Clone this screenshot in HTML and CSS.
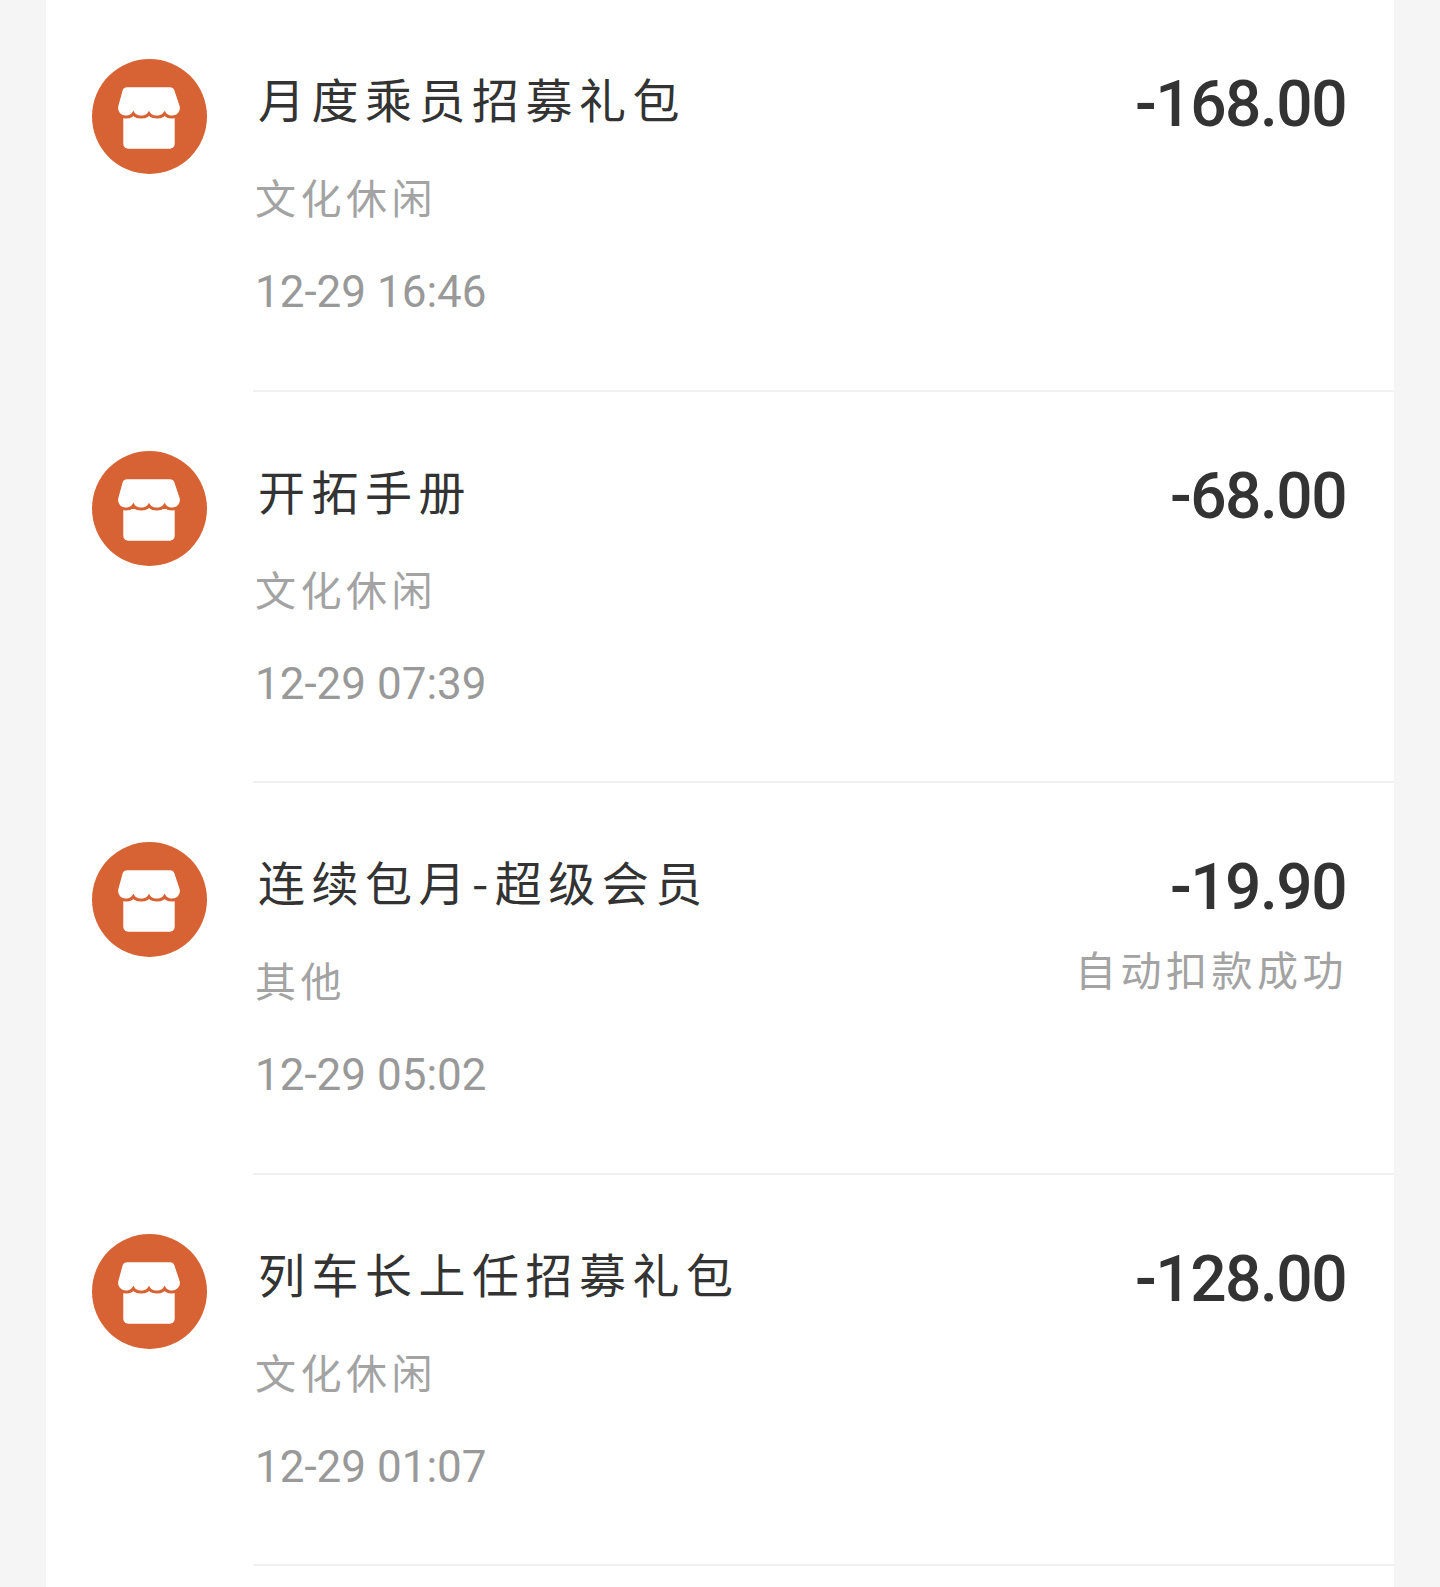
FILE: index.html
```html
<!DOCTYPE html>
<html lang="zh-CN">
<head>
<meta charset="UTF-8">
<title>账单</title>
<link rel="stylesheet" href="styles.css">
</head>
<body>
<ul id="bills">
    <li class="bill">
        <svg class="icon" viewBox="0 0 114 114"><use href="#shop"></use></svg>
        <div class="info">
            <div class="text">
                <p class="name">月度乘员招募礼包</p>
                <p class="sub">文化休闲</p>
                <p class="time">12-29 16:46</p>
            </div>
            <div class="pay">
                <p class="money">-168.00</p>
            </div>
        </div>
    </li>
    <li class="bill">
        <svg class="icon" viewBox="0 0 114 114"><use href="#shop"></use></svg>
        <div class="info">
            <div class="text">
                <p class="name">开拓手册</p>
                <p class="sub">文化休闲</p>
                <p class="time">12-29 07:39</p>
            </div>
            <div class="pay">
                <p class="money">-68.00</p>
            </div>
        </div>
    </li>
    <li class="bill">
        <svg class="icon" viewBox="0 0 114 114"><use href="#shop"></use></svg>
        <div class="info">
            <div class="text">
                <p class="name">连续包月-超级会员</p>
                <p class="sub">其他</p>
                <p class="time">12-29 05:02</p>
            </div>
            <div class="pay">
                <p class="money">-19.90</p>
                <p class="state">自动扣款成功</p>
            </div>
        </div>
    </li>
    <li class="bill">
        <svg class="icon" viewBox="0 0 114 114"><use href="#shop"></use></svg>
        <div class="info">
            <div class="text">
                <p class="name">列车长上任招募礼包</p>
                <p class="sub">文化休闲</p>
                <p class="time">12-29 01:07</p>
            </div>
            <div class="pay">
                <p class="money">-128.00</p>
            </div>
        </div>
    </li>
</ul>
<svg class="defs" width="0" height="0">
    <symbol id="shop" viewBox="0 0 114 114">
        <circle cx="57" cy="57" r="57" fill="#d76233"></circle>
        <rect x="31" y="50" width="51" height="39" rx="5" fill="#fff"></rect>
        <path d="M35 28H77c2.500 0 4 1 4.600 3L87 47c.8 4.500-2.500 9-7.500 9-3.500 0-6.500-2-7.500-5-1 3-4 5-7.800 5s-6.800-2-7.700-5c-1 3-4 5-7.700 5s-6.800-2-7.800-5c-1 3-4 5-7.500 5-5 0-8.300-4.500-7.500-9L30.400 31c.6-2 2.100-3 4.600-3Z" fill="#fff" stroke="#d76233" stroke-width="6" paint-order="stroke"></path>
    </symbol>
</svg>
</body>
</html>
```

FILE: styles.css
```css
html, body {
    margin: 0;
    background: #f5f5f5;
}
body {
    height: 1587px;
    overflow: hidden;
}
p {
    margin: 0;
}
ul {
    margin: 0;
    padding: 0;
    list-style: none;
}
.defs {
    display: block;
}
#bills {
    margin: 0 46px;
    height: 1587px;
    overflow: hidden;
    background: #fff;
}
.bill {
    display: flex;
    height: 391.600px;
}
.icon {
    flex: none;
    width: 115px;
    height: 115px;
    margin: 59px 46px 0 46px;
}
.info {
    flex: 1;
    display: flex;
    justify-content: space-between;
    padding: 51px 46px 0 2px;
    border-bottom: 2px solid #f0f0f0;
    font-family: "Noto Sans CJK SC", sans-serif;
}
.name {
    margin-left: 3px;
    font-size: 47px;
    line-height: 94px;
    letter-spacing: 6.500px;
    color: #333;
}
.sub {
    margin-top: 5px;
    font-size: 41px;
    line-height: 93px;
    letter-spacing: 4.500px;
    color: #a3a3a3;
}
.time {
    margin-top: 3px;
    font-family: Roboto, sans-serif;
    font-size: 44px;
    line-height: 93px;
    color: #999;
}
.pay {
    text-align: right;
}
.money {
    margin: 7px 2px 0 0;
    font-family: Roboto, sans-serif;
    font-size: 64px;
    font-weight: 500;
    line-height: 94px;
    letter-spacing: -1.500px;
    color: #333;
}
.state {
    font-size: 41px;
    line-height: 66px;
    letter-spacing: 4.500px;
    color: #a3a3a3;
}
```
